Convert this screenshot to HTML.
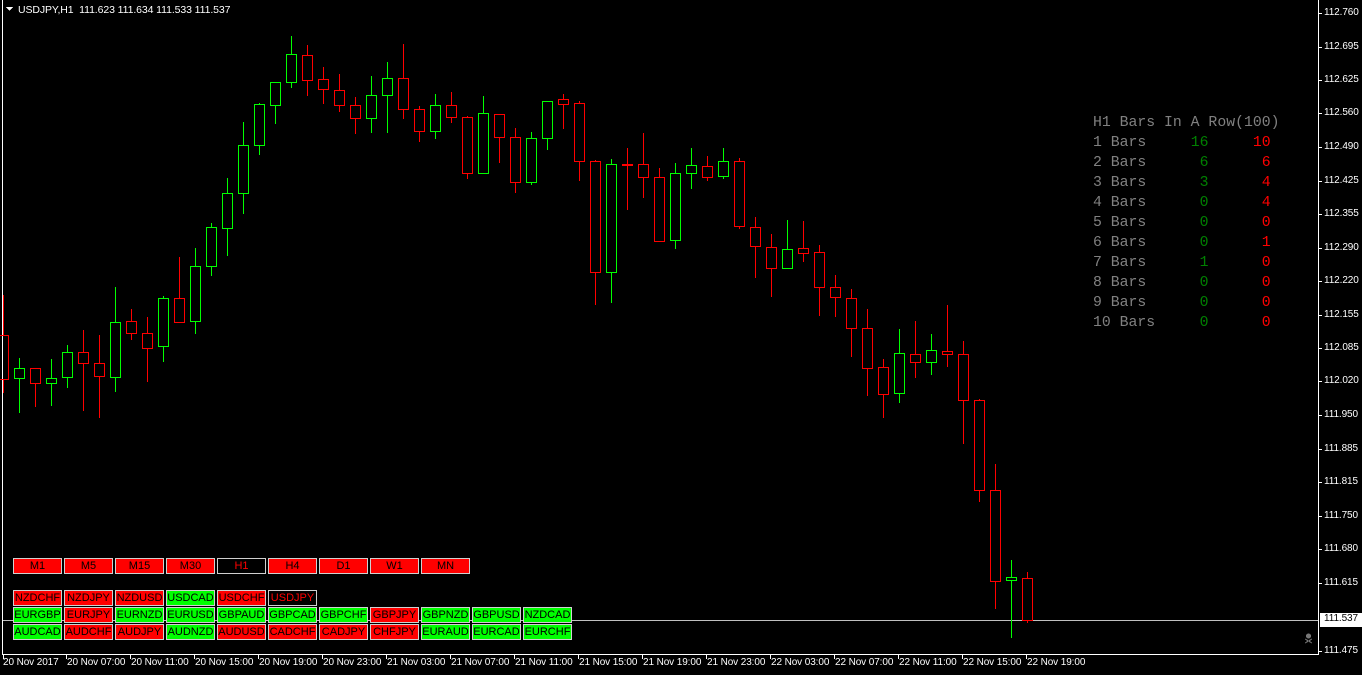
<!DOCTYPE html>
<html><head><meta charset="utf-8"><style>
html,body{margin:0;padding:0;background:#000;width:1362px;height:675px;overflow:hidden;position:relative;font-family:"Liberation Sans",sans-serif}
.t{position:absolute;color:#fff;font-size:11px;white-space:nowrap}
.x{position:absolute;color:#fff;font-size:10px;white-space:nowrap;letter-spacing:-0.1px}
.b{position:absolute;height:14px;width:47px;border:1px solid #d0d0d0;font-size:11px;line-height:14px;text-align:center;color:#000}
.r{background:#f00}.g{background:#0f0}.k{background:#000;color:#f00}
.st{position:absolute;left:1093px;font-family:"Liberation Mono",monospace;font-size:14.8px;color:#808080;white-space:pre;line-height:20px}
.st span.gn{color:#008000}.st span.rd{color:#f00}
</style></head><body>
<svg width="1362" height="675" style="position:absolute;left:0;top:0" shape-rendering="crispEdges">
<line x1="2.5" y1="0" x2="2.5" y2="655" stroke="#fff"/>
<line x1="1318.5" y1="0" x2="1318.5" y2="655" stroke="#fff"/>
<line x1="2" y1="654.5" x2="1319" y2="654.5" stroke="#fff"/>
<line x1="3" y1="620.5" x2="1318" y2="620.5" stroke="#c0c0c0"/>
<g stroke="#fff">
<path d="M1319 13.5h3M1319 47.5h3M1319 80.5h3M1319 113.5h3M1319 147.5h3M1319 181.5h3M1319 214.5h3M1319 248.5h3M1319 281.5h3M1319 315.5h3M1319 348.5h3M1319 381.5h3M1319 415.5h3M1319 449.5h3M1319 482.5h3M1319 516.5h3M1319 549.5h3M1319 583.5h3M1319 651.5h3"/>
<path d="M3.5 655v4M66.5 655v4M130.5 655v4M194.5 655v4M258.5 655v4M322.5 655v4M386.5 655v4M450.5 655v4M514.5 655v4M578.5 655v4M642.5 655v4M706.5 655v4M770.5 655v4M834.5 655v4M898.5 655v4M962.5 655v4M1026.5 655v4"/>
</g>
<g fill="none" stroke="#f00">
<path d="M3.5 295V335M3.5 379V393M-1.5 335.5h10v44h-10z"/>
<path d="M35.5 368V368M35.5 383V407M30.5 368.5h10v15h-10z"/>
<path d="M83.5 330V352M83.5 363V411M78.5 352.5h10v11h-10z"/>
<path d="M99.5 335V363M99.5 376V418M94.5 363.5h10v13h-10z"/>
<path d="M131.5 309V321M131.5 333V340M126.5 321.5h10v12h-10z"/>
<path d="M147.5 317V333M147.5 348V382M142.5 333.5h10v15h-10z"/>
<path d="M179.5 257V298M179.5 322V323M174.5 298.5h10v24h-10z"/>
<path d="M307.5 45V55M307.5 80V96M302.5 55.5h10v25h-10z"/>
<path d="M323.5 67V79M323.5 89V104M318.5 79.5h10v10h-10z"/>
<path d="M339.5 74V90M339.5 105V112M334.5 90.5h10v15h-10z"/>
<path d="M355.5 97V105M355.5 118V134M350.5 105.5h10v13h-10z"/>
<path d="M403.5 44V78M403.5 109V119M398.5 78.5h10v31h-10z"/>
<path d="M419.5 106V109M419.5 131V142M414.5 109.5h10v22h-10z"/>
<path d="M451.5 92V105M451.5 117V123M446.5 105.5h10v12h-10z"/>
<path d="M467.5 116V117M467.5 173V179M462.5 117.5h10v56h-10z"/>
<path d="M499.5 114V114M499.5 137V163M494.5 114.5h10v23h-10z"/>
<path d="M515.5 128V137M515.5 182V193M510.5 137.5h10v45h-10z"/>
<path d="M563.5 94V99M563.5 104V129M558.5 99.5h10v5h-10z"/>
<path d="M579.5 101V103M579.5 161V181M574.5 103.5h10v58h-10z"/>
<path d="M595.5 160V161M595.5 272V305M590.5 161.5h10v111h-10z"/>
<path d="M627.5 148V210"/>
<path d="M622 165h11" stroke-width="2"/>
<path d="M643.5 133V164M643.5 177V198M638.5 164.5h10v13h-10z"/>
<path d="M659.5 168V177M654.5 177.5h10v64h-10z"/>
<path d="M707.5 156V166M707.5 177V181M702.5 166.5h10v11h-10z"/>
<path d="M739.5 158V161M739.5 226V229M734.5 161.5h10v65h-10z"/>
<path d="M755.5 217V227M755.5 246V278M750.5 227.5h10v19h-10z"/>
<path d="M771.5 234V247M771.5 268V297M766.5 247.5h10v21h-10z"/>
<path d="M803.5 221V248M803.5 253V262M798.5 248.5h10v5h-10z"/>
<path d="M819.5 245V252M819.5 287V316M814.5 252.5h10v35h-10z"/>
<path d="M835.5 275V287M835.5 297V317M830.5 287.5h10v10h-10z"/>
<path d="M851.5 289V298M851.5 328V357M846.5 298.5h10v30h-10z"/>
<path d="M867.5 309V328M867.5 368V396M862.5 328.5h10v40h-10z"/>
<path d="M883.5 359V367M883.5 394V418M878.5 367.5h10v27h-10z"/>
<path d="M915.5 321V354M915.5 362V378M910.5 354.5h10v8h-10z"/>
<path d="M947.5 305V351M947.5 354V367M942.5 351.5h10v3h-10z"/>
<path d="M963.5 341V354M963.5 400V444M958.5 354.5h10v46h-10z"/>
<path d="M979.5 399V400M979.5 490V502M974.5 400.5h10v90h-10z"/>
<path d="M995.5 464V490M995.5 581V609M990.5 490.5h10v91h-10z"/>
<path d="M1027.5 572V578M1027.5 620V623M1022.5 578.5h10v42h-10z"/>
</g>
<g fill="none" stroke="#0f0">
<path d="M19.5 358V368M19.5 378V413M14.5 368.5h10v10h-10z"/>
<path d="M51.5 359V378M51.5 383V406M46.5 378.5h10v5h-10z"/>
<path d="M67.5 345V352M67.5 377V388M62.5 352.5h10v25h-10z"/>
<path d="M115.5 287V322M115.5 377V392M110.5 322.5h10v55h-10z"/>
<path d="M163.5 296V298M163.5 346V362M158.5 298.5h10v48h-10z"/>
<path d="M195.5 248V266M195.5 321V334M190.5 266.5h10v55h-10z"/>
<path d="M211.5 223V227M211.5 266V276M206.5 227.5h10v39h-10z"/>
<path d="M227.5 178V193M227.5 228V256M222.5 193.5h10v35h-10z"/>
<path d="M243.5 122V145M243.5 193V214M238.5 145.5h10v48h-10z"/>
<path d="M259.5 103V104M259.5 145V155M254.5 104.5h10v41h-10z"/>
<path d="M275.5 105V124M270.5 82.5h10v23h-10z"/>
<path d="M291.5 36V54M291.5 82V88M286.5 54.5h10v28h-10z"/>
<path d="M371.5 76V95M371.5 118V133M366.5 95.5h10v23h-10z"/>
<path d="M387.5 62V78M387.5 95V133M382.5 78.5h10v17h-10z"/>
<path d="M435.5 94V105M435.5 131V139M430.5 105.5h10v26h-10z"/>
<path d="M483.5 96V113M478.5 113.5h10v60h-10z"/>
<path d="M531.5 132V138M531.5 182V185M526.5 138.5h10v44h-10z"/>
<path d="M547.5 138V150M542.5 101.5h10v37h-10z"/>
<path d="M611.5 159V164M611.5 272V303M606.5 164.5h10v108h-10z"/>
<path d="M675.5 163V173M675.5 240V249M670.5 173.5h10v67h-10z"/>
<path d="M691.5 148V165M691.5 173V189M686.5 165.5h10v8h-10z"/>
<path d="M723.5 148V161M723.5 176V179M718.5 161.5h10v15h-10z"/>
<path d="M787.5 220V249M787.5 268V269M782.5 249.5h10v19h-10z"/>
<path d="M899.5 329V353M899.5 393V403M894.5 353.5h10v40h-10z"/>
<path d="M931.5 334V350M931.5 362V375M926.5 350.5h10v12h-10z"/>
<path d="M1011.5 560V577M1011.5 580V638M1006.5 577.5h10v3h-10z"/>
</g>
<path d="M6 7h7l-3.5 4z" fill="#fff"/>
<rect x="1320" y="613" width="42" height="14" fill="#fff"/>
<g fill="#777"><circle cx="1308.5" cy="636" r="2.5"/><path d="M1305 639l7 4M1312 639l-7 4" stroke="#777"/></g>
</svg>
<div class="x" style="left:18px;top:4px;font-size:10.5px">USDJPY,H1&nbsp; 111.623 111.634 111.533 111.537</div>
<div class="x" style="left:1324px;top:7px">112.760</div>
<div class="x" style="left:1324px;top:41px">112.695</div>
<div class="x" style="left:1324px;top:74px">112.625</div>
<div class="x" style="left:1324px;top:107px">112.560</div>
<div class="x" style="left:1324px;top:141px">112.490</div>
<div class="x" style="left:1324px;top:175px">112.425</div>
<div class="x" style="left:1324px;top:208px">112.355</div>
<div class="x" style="left:1324px;top:242px">112.290</div>
<div class="x" style="left:1324px;top:275px">112.220</div>
<div class="x" style="left:1324px;top:309px">112.155</div>
<div class="x" style="left:1324px;top:342px">112.085</div>
<div class="x" style="left:1324px;top:375px">112.020</div>
<div class="x" style="left:1324px;top:409px">111.950</div>
<div class="x" style="left:1324px;top:443px">111.885</div>
<div class="x" style="left:1324px;top:476px">111.815</div>
<div class="x" style="left:1324px;top:510px">111.750</div>
<div class="x" style="left:1324px;top:543px">111.680</div>
<div class="x" style="left:1324px;top:577px">111.615</div>
<div class="x" style="left:1324px;top:613px;color:#000">111.537</div>
<div class="x" style="left:1324px;top:645px">111.475</div>
<div class="x" style="left:3px;top:657px">20 Nov 2017</div>
<div class="x" style="left:67px;top:657px">20 Nov 07:00</div>
<div class="x" style="left:131px;top:657px">20 Nov 11:00</div>
<div class="x" style="left:195px;top:657px">20 Nov 15:00</div>
<div class="x" style="left:259px;top:657px">20 Nov 19:00</div>
<div class="x" style="left:323px;top:657px">20 Nov 23:00</div>
<div class="x" style="left:387px;top:657px">21 Nov 03:00</div>
<div class="x" style="left:451px;top:657px">21 Nov 07:00</div>
<div class="x" style="left:515px;top:657px">21 Nov 11:00</div>
<div class="x" style="left:579px;top:657px">21 Nov 15:00</div>
<div class="x" style="left:643px;top:657px">21 Nov 19:00</div>
<div class="x" style="left:707px;top:657px">21 Nov 23:00</div>
<div class="x" style="left:771px;top:657px">22 Nov 03:00</div>
<div class="x" style="left:835px;top:657px">22 Nov 07:00</div>
<div class="x" style="left:899px;top:657px">22 Nov 11:00</div>
<div class="x" style="left:963px;top:657px">22 Nov 15:00</div>
<div class="x" style="left:1027px;top:657px">22 Nov 19:00</div>

<div class="b r" style="left:13px;top:558px">M1</div>
<div class="b r" style="left:64px;top:558px">M5</div>
<div class="b r" style="left:115px;top:558px">M15</div>
<div class="b r" style="left:166px;top:558px">M30</div>
<div class="b k" style="left:217px;top:558px">H1</div>
<div class="b r" style="left:268px;top:558px">H4</div>
<div class="b r" style="left:319px;top:558px">D1</div>
<div class="b r" style="left:370px;top:558px">W1</div>
<div class="b r" style="left:421px;top:558px">MN</div>

<div class="b r" style="left:13px;top:590px">NZDCHF</div>
<div class="b r" style="left:64px;top:590px">NZDJPY</div>
<div class="b r" style="left:115px;top:590px">NZDUSD</div>
<div class="b g" style="left:166px;top:590px">USDCAD</div>
<div class="b r" style="left:217px;top:590px">USDCHF</div>
<div class="b k" style="left:268px;top:590px">USDJPY</div>

<div class="b g" style="left:13px;top:607px">EURGBP</div>
<div class="b r" style="left:64px;top:607px">EURJPY</div>
<div class="b g" style="left:115px;top:607px">EURNZD</div>
<div class="b g" style="left:166px;top:607px">EURUSD</div>
<div class="b g" style="left:217px;top:607px">GBPAUD</div>
<div class="b g" style="left:268px;top:607px">GBPCAD</div>
<div class="b g" style="left:319px;top:607px">GBPCHF</div>
<div class="b r" style="left:370px;top:607px">GBPJPY</div>
<div class="b g" style="left:421px;top:607px">GBPNZD</div>
<div class="b g" style="left:472px;top:607px">GBPUSD</div>
<div class="b g" style="left:523px;top:607px">NZDCAD</div>

<div class="b g" style="left:13px;top:624px">AUDCAD</div>
<div class="b r" style="left:64px;top:624px">AUDCHF</div>
<div class="b r" style="left:115px;top:624px">AUDJPY</div>
<div class="b g" style="left:166px;top:624px">AUDNZD</div>
<div class="b r" style="left:217px;top:624px">AUDUSD</div>
<div class="b r" style="left:268px;top:624px">CADCHF</div>
<div class="b r" style="left:319px;top:624px">CADJPY</div>
<div class="b r" style="left:370px;top:624px">CHFJPY</div>
<div class="b g" style="left:421px;top:624px">EURAUD</div>
<div class="b g" style="left:472px;top:624px">EURCAD</div>
<div class="b g" style="left:523px;top:624px">EURCHF</div>

<div class="st" style="top:113px">H1 Bars In A Row(100)
1 Bars     <span class="gn">16</span>     <span class="rd">10</span>
2 Bars      <span class="gn">6</span>      <span class="rd">6</span>
3 Bars      <span class="gn">3</span>      <span class="rd">4</span>
4 Bars      <span class="gn">0</span>      <span class="rd">4</span>
5 Bars      <span class="gn">0</span>      <span class="rd">0</span>
6 Bars      <span class="gn">0</span>      <span class="rd">1</span>
7 Bars      <span class="gn">1</span>      <span class="rd">0</span>
8 Bars      <span class="gn">0</span>      <span class="rd">0</span>
9 Bars      <span class="gn">0</span>      <span class="rd">0</span>
10 Bars     <span class="gn">0</span>      <span class="rd">0</span></div>
</body></html>
